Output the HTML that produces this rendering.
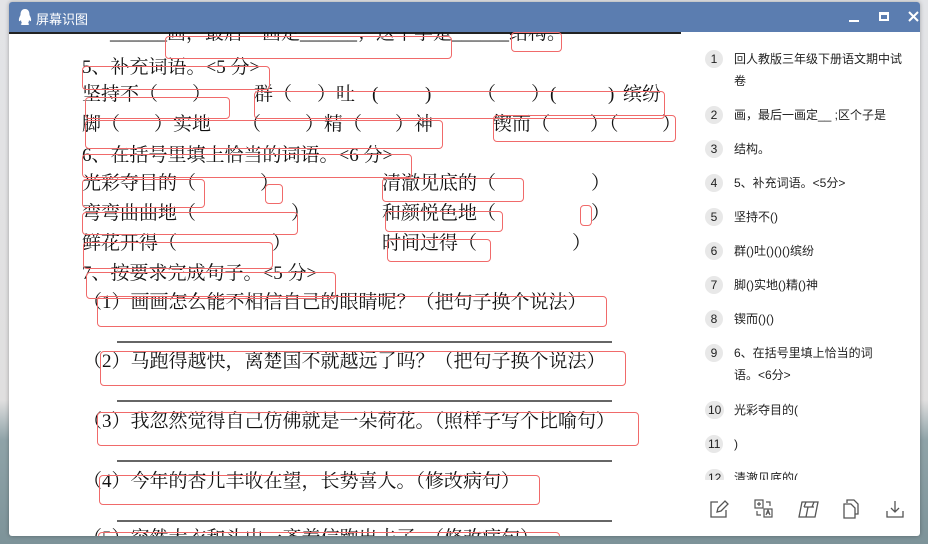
<!DOCTYPE html>
<html><head><meta charset="utf-8"><style>
*{margin:0;padding:0;box-sizing:border-box}
body{width:928px;height:544px;overflow:hidden;position:relative;background:linear-gradient(#e3e4e7 0,#e0dfdf 400px,#8fa3a8 440px,#7d9399 544px);font-family:"Liberation Sans","Noto Sans CJK SC",sans-serif}
.win{position:absolute;left:9px;top:2px;width:911px;height:534px;background:#fff;border-radius:3px;overflow:hidden;box-shadow:0 0 4px rgba(0,0,0,.3)}
.tb{position:absolute;left:0;top:0;width:911px;height:30px;background:#5b7db0;color:#fff;font-size:13px}
.doc{position:absolute;left:0;top:30px;width:672px;height:504px;overflow:hidden;font-family:"Liberation Serif","Noto Serif CJK SC",serif;font-size:19px;color:#111}
.doc div.t{position:absolute;white-space:pre;line-height:22px}
.r{position:absolute;border:1px solid #f06a6a;border-radius:4px}
.u{position:absolute;height:2px;background:#666;left:108px;width:495px}
.side{position:absolute;left:681px;top:30px;width:230px;height:448px;overflow:hidden;font-size:12px;color:#222}
.it{position:absolute;left:15px;width:200px;line-height:22px}
.n{position:absolute;left:0;top:2px;min-width:18px;height:18px;padding:0 3px;border-radius:9px;background:#e8e8e8;text-align:center;line-height:18px;font-size:12px}
.it span.x{position:absolute;left:29px;white-space:nowrap}
.ic{position:absolute;top:497px}
</style></head><body>
<div class="win">
<div class="tb">
<svg style="position:absolute;left:9px;top:7px" width="14" height="17" viewBox="0 0 14 17"><path d="M7 0C3.5 0 2.5 3 2.5 6 1.5 8 0.5 10 1 12c1 .5 1.5-.5 2-1 0 2 1 3 1 3-1 .5-2 1.5 0 2h6c2-.5 1-1.5 0-2 0 0 1-1 1-3 .5.5 1 1.5 2 1 .5-2-.5-4-1.5-6C11.5 3 10.5 0 7 0z" fill="#fff"/></svg>
<span style="position:absolute;left:27px;top:7px">屏幕识图</span>
<div style="position:absolute;left:840px;top:18px;width:10px;height:2px;background:#fff"></div>
<div style="position:absolute;left:870px;top:10px;width:10px;height:9px;border:2px solid #fff;border-top-width:3px"></div>
<svg style="position:absolute;left:899px;top:9px" width="11" height="11"><path d="M1 1L10 10M10 1L1 10" stroke="#fff" stroke-width="2"/></svg>
</div>
<div class="doc">
<div style="position:absolute;left:0;top:0;width:672px;height:2px;background:#222"></div>
<div class="t" style="left:101px;top:-9px">______画，最后一画定______；这个字是______结构。</div>
<div class="t" style="left:73px;top:25px">5、补充词语。&lt;5 分&gt;</div>
<div class="t" style="left:73px;top:52px">坚持不（</div>
<div class="t" style="left:183px;top:52px">）</div>
<div class="t" style="left:245px;top:52px">群（</div>
<div class="t" style="left:308px;top:52px">）吐</div>
<div class="t" style="left:363px;top:52px">(</div>
<div class="t" style="left:416px;top:52px">)</div>
<div class="t" style="left:468px;top:52px">（</div>
<div class="t" style="left:522px;top:52px">）(</div>
<div class="t" style="left:599px;top:52px">)</div>
<div class="t" style="left:614px;top:52px">缤纷</div>
<div class="t" style="left:73px;top:82px">脚（</div>
<div class="t" style="left:145px;top:82px">）实地</div>
<div class="t" style="left:233px;top:82px">（</div>
<div class="t" style="left:296px;top:82px">）精（</div>
<div class="t" style="left:386px;top:82px">）神</div>
<div class="t" style="left:484px;top:82px">锲而（</div>
<div class="t" style="left:581px;top:82px">）（</div>
<div class="t" style="left:653px;top:82px">）</div>
<div class="t" style="left:73px;top:113px">6、在括号里填上恰当的词语。&lt;6 分&gt;</div>
<div class="t" style="left:73px;top:141px">光彩夺目的（</div>
<div class="t" style="left:251px;top:141px">）</div>
<div class="t" style="left:373px;top:141px">清澈见底的（　　　　　）</div>
<div class="t" style="left:73px;top:171px">弯弯曲曲地（　　　　　）</div>
<div class="t" style="left:373px;top:171px">和颜悦色地（　　　　　）</div>
<div class="t" style="left:73px;top:201px">鲜花开得（　　　　　）</div>
<div class="t" style="left:373px;top:201px">时间过得（　　　　　）</div>
<div class="t" style="left:73px;top:231px">7、按要求完成句子。&lt;5 分&gt;</div>
<div class="t" style="left:74px;top:260px">（1）画画怎么能不相信自己的眼睛呢？（把句子换个说法）</div>
<div class="u" style="top:309px"></div>
<div class="t" style="left:74px;top:319px">（2）马跑得越快，离楚国不就越远了吗？（把句子换个说法）</div>
<div class="u" style="top:368px"></div>
<div class="t" style="left:74px;top:379px">（3）我忽然觉得自己仿佛就是一朵荷花。（照样子写个比喻句）</div>
<div class="u" style="top:428px"></div>
<div class="t" style="left:74px;top:439px">（4）今年的杏儿丰收在望，长势喜人。（修改病句）</div>
<div class="u" style="top:488px"></div>
<div class="t" style="left:74px;top:496px">（5）突然大衣和头巾一齐着信跑出去了。（修改病句）</div>
<div class="r" style="left:156px;top:4px;width:287px;height:23px"></div>
<div class="r" style="left:502px;top:0px;width:51px;height:20px"></div>
<div class="r" style="left:73px;top:34px;width:188px;height:24px"></div>
<div class="r" style="left:76px;top:65px;width:145px;height:22px"></div>
<div class="r" style="left:245px;top:59px;width:411px;height:28px"></div>
<div class="r" style="left:76px;top:88px;width:358px;height:29px"></div>
<div class="r" style="left:484px;top:83px;width:183px;height:27px"></div>
<div class="r" style="left:73px;top:122px;width:330px;height:24px"></div>
<div class="r" style="left:73px;top:147px;width:123px;height:29px"></div>
<div class="r" style="left:256px;top:152px;width:18px;height:20px"></div>
<div class="r" style="left:373px;top:146px;width:142px;height:24px"></div>
<div class="r" style="left:73px;top:180px;width:216px;height:23px"></div>
<div class="r" style="left:376px;top:179px;width:118px;height:21px"></div>
<div class="r" style="left:571px;top:173px;width:12px;height:21px"></div>
<div class="r" style="left:74px;top:210px;width:190px;height:27px"></div>
<div class="r" style="left:378px;top:207px;width:104px;height:23px"></div>
<div class="r" style="left:77px;top:240px;width:250px;height:27px"></div>
<div class="r" style="left:88px;top:264px;width:510px;height:31px"></div>
<div class="r" style="left:91px;top:319px;width:526px;height:35px"></div>
<div class="r" style="left:88px;top:380px;width:542px;height:34px"></div>
<div class="r" style="left:90px;top:443px;width:441px;height:30px"></div>
<div class="r" style="left:89px;top:500px;width:462px;height:30px"></div>
</div>
<div class="side">
<div class="it" style="top:16px"><span class="n">1</span><span class="x">回人教版三年级下册语文期中试</span></div>
<div class="it" style="top:38px"><span class="x">卷</span></div>
<div class="it" style="top:72px"><span class="n">2</span><span class="x">画，最后一画定__ ;区个子是</span></div>
<div class="it" style="top:106px"><span class="n">3</span><span class="x">结构。</span></div>
<div class="it" style="top:140px"><span class="n">4</span><span class="x">5、补充词语。&lt;5分&gt;</span></div>
<div class="it" style="top:174px"><span class="n">5</span><span class="x">坚持不()</span></div>
<div class="it" style="top:208px"><span class="n">6</span><span class="x">群()吐()()()缤纷</span></div>
<div class="it" style="top:242px"><span class="n">7</span><span class="x">脚()实地()精()神</span></div>
<div class="it" style="top:276px"><span class="n">8</span><span class="x">锲而()()</span></div>
<div class="it" style="top:310px"><span class="n">9</span><span class="x">6、在括号里填上恰当的词</span></div>
<div class="it" style="top:332px"><span class="x">语。&lt;6分&gt;</span></div>
<div class="it" style="top:367px"><span class="n">10</span><span class="x">光彩夺目的(</span></div>
<div class="it" style="top:401px"><span class="n">11</span><span class="x">)</span></div>
<div class="it" style="top:435px"><span class="n">12</span><span class="x">清澈见底的(</span></div>
</div>
<svg class="ic" style="left:700px" width="20" height="20" viewBox="0 0 20 20" fill="none" stroke="#555" stroke-width="1.3"><path d="M9 3H2v15h15v-7"/><path d="M8 13l1-4 7-7 3 3-7 7z"/></svg>
<svg class="ic" style="left:745px" width="20" height="20" viewBox="0 0 20 20" fill="none" stroke="#555" stroke-width="1.2"><rect x="1" y="1" width="8" height="8"/><path d="M3 5h4M5 3v4"/><rect x="10" y="10" width="8" height="8"/><path d="M12 16l2-5 2 5M13 14h2M12 3h4v4M3 12v4h4"/></svg>
<svg class="ic" style="left:789px" width="22" height="20" viewBox="0 0 22 20" fill="none" stroke="#555" stroke-width="1.3"><path d="M4 3h16l-3 15H1z"/><path d="M6 8h10M10 8l-2 10M8 3l-2 5M16 3l-2 5"/></svg>
<svg class="ic" style="left:833px" width="18" height="20" viewBox="0 0 18 20" fill="none" stroke="#555" stroke-width="1.3"><path d="M5 4V1h7l4 4v10h-3"/><path d="M2 5h7l4 4v10H2z"/></svg>
<svg class="ic" style="left:876px" width="20" height="20" viewBox="0 0 20 20" fill="none" stroke="#555" stroke-width="1.3"><path d="M2 12v6h16v-6M10 2v11M6 9l4 4 4-4"/></svg>
</div>
</body></html>
